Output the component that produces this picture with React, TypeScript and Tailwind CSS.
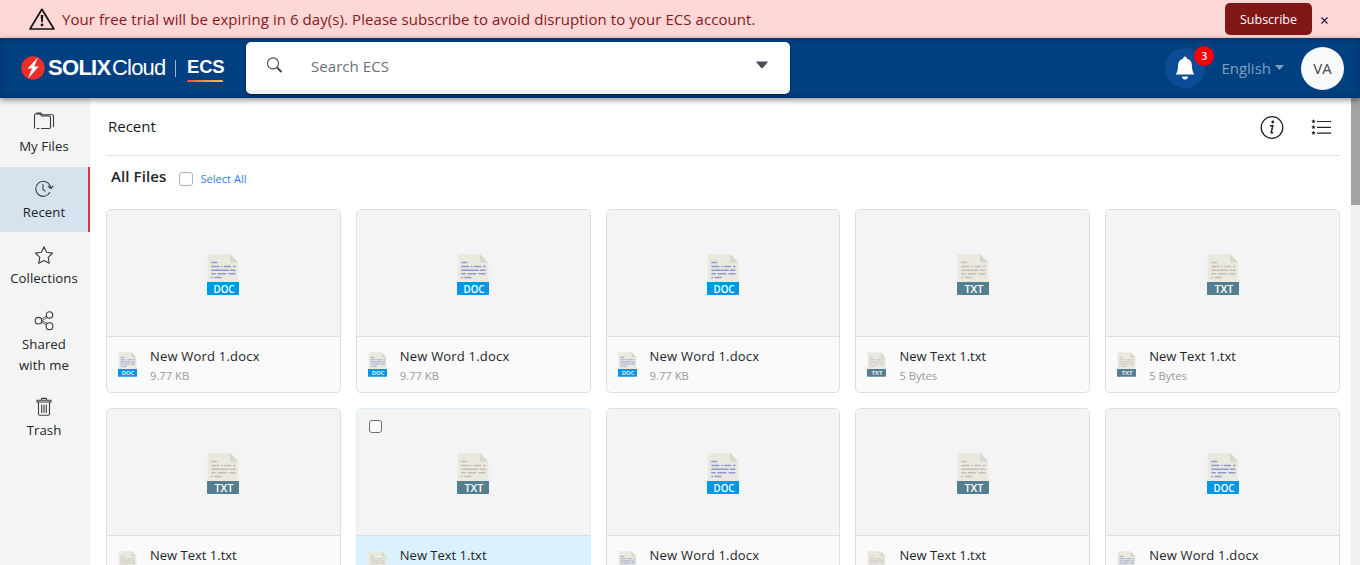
import type { ReactNode } from "react";

type Kind = "doc" | "txt";

const files: { kind: Kind; active?: boolean }[] = [
  { kind: "doc" },
  { kind: "doc" },
  { kind: "doc" },
  { kind: "txt" },
  { kind: "txt" },
  { kind: "txt" },
  { kind: "txt", active: true },
  { kind: "doc" },
  { kind: "txt" },
  { kind: "doc" },
];

function FileIcon({ kind, className }: { kind: Kind; className: string }) {
  const doc = kind === "doc";
  const ink = doc ? "#8e9bd0" : "#c9bcb8";
  const band = doc ? "#0096e6" : "#557f91";
  return (
    <svg viewBox="0 0 32 41" className={className}>
      <path d="M.8 0H23l8.200 8.500V29H.8z" fill="#e9e9e0" />
      <path d="M23 0v8.500h8.200z" fill="#d7d7ca" />
      <g stroke={ink} strokeWidth="1.400" strokeLinecap="round">
        <path d="M4.800 8.500h5M4.800 12.500h7M14.500 12.500h.5M17.500 12.500h6M26.500 12.500h1.500M4.800 16.200h16.500M23.500 16.200h4.500M4.800 19.800h3.500M11 19.800h8M22 19.800h6M4.800 23.500h.6M8 23.500h6" />
      </g>
      <path d="M0 28h32v12a1 1 0 0 1-1 1H1a1 1 0 0 1-1-1z" fill={band} />
      <text
        x="17"
        y="38.500"
        textAnchor="middle"
        fontSize="10.200"
        fontWeight="600"
        textLength={doc ? 21 : 19}
        lengthAdjust="spacingAndGlyphs"
        fill="#fff"
        fontFamily="Open Sans, sans-serif"
      >
        {doc ? "DOC" : "TXT"}
      </text>
    </svg>
  );
}

function FileCard({ kind, active }: { kind: Kind; active?: boolean }) {
  return (
    <div
      className={
        active
          ? "relative flex h-[184px] flex-col overflow-hidden rounded-[5px] border border-[#d8f0fc] bg-[#dbf1fd]"
          : "relative flex h-[184px] flex-col overflow-hidden rounded-[5px] border border-[#dedede] bg-[#fafafa]"
      }
    >
      {active && (
        <span className="absolute left-3 top-[11px] size-[13px] rounded-[3px] border border-[#6f6f6f] bg-white" />
      )}
      <div className="flex h-[127px] shrink-0 items-center justify-center border-b border-[#dedede] bg-[#f4f4f4] pt-[3px]">
        <FileIcon kind={kind} className="h-[41px] w-8" />
      </div>
      <div className="flex pl-[11px] pt-[15px]">
        <FileIcon kind={kind} className="h-[25px] w-[19px]" />
        <div className="-mt-[6px] ml-[13px]">
          <div
            className={
              kind === "doc"
                ? "h-5 whitespace-nowrap text-[13px] leading-5 tracking-[0.200px] text-[#212529]"
                : "h-5 whitespace-nowrap text-[13px] leading-5 text-[#212529]"
            }
          >
            {kind === "doc" ? "New Word 1.docx" : "New Text 1.txt"}
          </div>
          <div className="h-5 whitespace-nowrap text-[11.200px] leading-5 text-[#999]">
            {kind === "doc" ? "9.77 KB" : "5 Bytes"}
          </div>
        </div>
      </div>
    </div>
  );
}

const line = {
  fill: "none",
  stroke: "#3c3c3c",
  strokeWidth: 1.1,
  strokeLinejoin: "round" as const,
  strokeLinecap: "round" as const,
};

function NavItem({
  label,
  icon,
  className,
}: {
  label: ReactNode;
  icon: ReactNode;
  className: string;
}) {
  return (
    <div className={className}>
      {icon}
      <span className="mt-[3px] text-center text-[13.200px] leading-[21px] tracking-[0.070px] text-[#212529]">{label}</span>
    </div>
  );
}

function Sidebar() {
  const item = "flex shrink-0 flex-col items-center pr-[2px]";
  return (
    <nav className="flex w-[90px] shrink-0 flex-col bg-[#f4f4f4]">
      <NavItem
        className={`${item} h-[69px] pt-[13px]`}
        label={<span className="relative top-[2px]">My Files</span>}
        icon={
          <svg className="h-5 w-[22px]" viewBox="0 0 22 20" {...line}>
            <path d="M1.500 17V4.500q0-1.500 1.300-1.500H7l1.500 2H16q1.500 0 1.500 1.500V17M3.500 2h4.200l1.600 1.700h9.500q1.700 0 1.700 1.500V15.500M4 17.500h2M8.500 17.500h8" />
          </svg>
        }
      />
      <NavItem
        className="flex h-[65px] shrink-0 flex-col items-center border-r-2 border-[#ef3030] bg-[#d6e2ee] pt-3"
        label="Recent"
        icon={
          <svg className="h-5 w-[22px]" viewBox="0 0 22 20" {...line}>
            <path d="M16.800 13.500A7.500 7.500 0 1 1 17 6.500l.8 2.800M15.200 7.400l2.700 2.300 2-2.600M10 5.500v5l2.200 1.600" />
          </svg>
        }
      />
      <NavItem
        className={`${item} h-[66px] pt-[13px]`}
        label="Collections"
        icon={
          <svg className="h-5 w-[22px]" viewBox="0 0 22 20" {...line}>
            <path d="m11 1.800 2.600 5.500 6 .8-4.400 4.200 1.100 6-5.300-2.900-5.300 2.900 1.100-6-4.400-4.200 6-.8z" />
          </svg>
        }
      />
      <NavItem
        className={`${item} h-[87px] pt-[13px]`}
        label={
          <>
            Shared
            <br />
            with me
          </>
        }
        icon={
          <svg className="h-5 w-[22px]" viewBox="0 0 22 20" {...line}>
            <circle cx="5.500" cy="9.700" r="3.300" />
            <circle cx="16.500" cy="3.900" r="3.200" />
            <circle cx="16.500" cy="15.200" r="3.400" />
            <path d="m8.300 8 5.400-2.900M8.300 11.300l5.200 2.500M9 9.700l5-3M9 9.800l5.200 2.600" strokeWidth=".8" />
          </svg>
        }
      />
      <NavItem
        className={`${item} h-[66px] pt-[12px]`}
        label="Trash"
        icon={
          <svg className="h-5 w-[22px]" viewBox="0 0 22 20" {...line}>
            <path d="M5.500 5.500v11.200q0 1.600 1.500 1.600h8q1.500 0 1.500-1.600V5.500M4 5V3.200h14V5zM8.300 3l.5-1.600h4.400l.5 1.600M8.700 8v7.500M11 8v7.500M13.300 8v7.500" />
          </svg>
        }
      />
    </nav>
  );
}

function Banner() {
  return (
    <div className="flex h-[38px] shrink-0 items-center bg-[#ffd7d7]">
      <svg className="ml-[29px] h-[23px] w-[26px]" viewBox="0 0 26 23">
        <path d="M12.900 1.300 24.900 21H1z" fill="none" stroke="#111" strokeWidth="1.700" strokeLinejoin="round" />
        <path d="M11.700 7h2.600l-.5 7.200h-1.600z" fill="#111" />
        <circle cx="13" cy="17" r="1.400" fill="#111" />
      </svg>
      <span className="ml-[7px] whitespace-nowrap text-[15px] tracking-[0.070px] text-[#851919]">
        Your free trial will be expiring in 6 day(s). Please subscribe to avoid disruption to your ECS account.
      </span>
      <button className="ml-auto h-8 w-[87px] rounded-[5px] bg-[#801717] pt-[2px] text-[12.500px] text-white">
        Subscribe
      </button>
      <svg className="ml-[9px] mr-[32px] mt-[3px] size-[7px]" viewBox="0 0 7 7" stroke="#17174a" strokeWidth="1.100">
        <path d="m.5.5 6 6M6.500.5l-6 6" />
      </svg>
    </div>
  );
}

function Logo() {
  return (
    <div className="flex w-[225px] shrink-0 items-center pl-[21px] font-['Liberation_Sans',sans-serif] text-white">
      <svg className="size-6 shrink-0" viewBox="0 0 24 24">
        <circle cx="12" cy="12" r="11.700" fill="#ee2e2b" />
        <path d="M16.800 1.500 6.500 12.700l4.600-.4L7 22.500l11-12.300-4.700.5z" fill="#fff" />
      </svg>
      <span className="ml-[3px] w-16 whitespace-nowrap text-[22px] font-bold leading-6 tracking-[-0.700px]">SOLIX</span>
      <span className="w-[54px] whitespace-nowrap text-[22px] leading-6 tracking-[-0.800px]">Cloud</span>
      <span className="ml-[9px] h-[17px] w-px bg-[#9db5cf]" />
      <span className="ml-[11px] flex w-[37px] flex-col pt-[4px]">
        <span className="text-[18.500px] font-bold leading-[18px] tracking-[-0.200px]">ECS</span>
        <span className="mt-[4px] h-[2px] w-9 rounded bg-linear-to-r from-[#f0503c] to-[#f6c04c]" />
      </span>
    </div>
  );
}

function Header() {
  return (
    <header className="relative z-10 flex h-[60px] shrink-0 items-center bg-[#003f80] shadow-[0_2px_6px_rgba(0,0,0,0.45),inset_0_0_6px_rgba(0,0,0,0.3)]">
      <Logo />
      <div className="ml-[21px] flex h-[52px] w-[544px] items-center rounded-[5px] border-b-4 border-[#f2f2f2] bg-white shadow-[0_1px_2px_rgba(0,0,0,0.6)]">
        <svg className="-mt-[3px] ml-5 h-4 w-[17px]" viewBox="0 0 17 16" fill="none" stroke="#44484c">
          <circle cx="7" cy="6.400" r="5.500" strokeWidth="1.100" />
          <path d="m11 10.500 4.500 4.500" strokeWidth="1.900" />
        </svg>
        <span className="ml-7 mt-[1px] text-[15px] tracking-[0.050px] text-[#6c7177]">Search ECS</span>
        <svg className="-mt-[3px] ml-auto mr-[22px] h-2 w-3" viewBox="0 0 12 8">
          <path d="M.5.500h11q.5.500 0 1L6.700 7q-.7.700-1.400 0L.5 1.500q-.5-.5 0-1z" fill="#495057" />
        </svg>
      </div>
      <div className="relative ml-auto flex size-10 items-center justify-center rounded-full bg-[#0c4c97]">
        <svg className="h-6 w-5" viewBox="0 0 20 24" fill="#fff">
          <path d="M10 .5c1 0 1.800.7 1.700 1.900 3.300.8 5 3.300 5.200 6.500.2 4.700.8 7.500 2.500 9.600H.6c1.700-2.100 2.300-4.900 2.500-9.600.2-3.200 1.900-5.700 5.200-6.500C8.200 1.200 9 .5 10 .5zM7 20.500h6c0 2-1.300 3-3 3s-3-1-3-3z" />
        </svg>
        <span className="absolute -top-[2px] left-[29px] flex size-5 items-center justify-center rounded-full bg-[#fd0000] text-[10px] font-semibold text-white">
          3
        </span>
      </div>
      <span className="ml-4 text-[15px] text-[#7e9fc0]">English</span>
      <svg className="-mt-[2px] ml-1 h-[5px] w-[9px]" viewBox="0 0 9 5">
        <path d="M0 0h9L4.500 5z" fill="#7e9fc0" />
      </svg>
      <span className="ml-[17px] mr-4 flex size-[43px] items-center justify-center rounded-full bg-[#f8f9fb] text-[15px] text-[#43474b]">
        VA
      </span>
    </header>
  );
}

function Toolbar() {
  return (
    <div className="flex h-[58px] items-center border-b border-[#dee2e6]">
      <span className="ml-[2px] text-[15px] text-[#16191c]">Recent</span>
      <svg className="ml-auto size-6" viewBox="0 0 24 24">
        <circle cx="12" cy="12.500" r="10.800" fill="none" stroke="#222" strokeWidth="1.300" />
        <circle cx="12.800" cy="7" r="1.400" fill="#222" />
        <path d="M9.800 10.800h3l-1.600 6.600q-.1 1.200 1.800-.2" fill="none" stroke="#222" strokeWidth="1.500" />
      </svg>
      <svg className="ml-[27px] mr-[9px] h-[18px] w-5" viewBox="0 0 20 18" stroke="#222" fill="#222">
        <path d="M6 3.500h14M6 9.300h14M6 15.100h14" strokeWidth="1.200" />
        <path
          d="m2.500 1 .6 1.500 1.600.2-1.200 1 .4 1.500-1.400-.8-1.400.8.4-1.500-1.200-1 1.600-.2zM2.500 6.800l.6 1.500 1.600.2-1.200 1 .4 1.500-1.400-.8-1.400.8.4-1.500-1.200-1 1.600-.2zM2.500 12.600l.6 1.500 1.600.2-1.200 1 .4 1.500-1.400-.8-1.400.8.4-1.500-1.200-1 1.600-.2z"
          stroke="none"
        />
      </svg>
    </div>
  );
}

export default function App() {
  return (
    <div className="flex h-[565px] w-[1360px] flex-col overflow-hidden bg-white font-['Open_Sans','Noto_Sans',sans-serif]">
      <Banner />
      <Header />
      <div className="flex min-h-0 flex-1">
        <Sidebar />
        <main className="min-w-0 flex-1 overflow-hidden pl-4 pr-[11px]">
          <Toolbar />
          <div className="flex h-[53px] items-start pl-[5px]">
            <span className="mt-[8px] text-[15px] font-semibold leading-6 tracking-[0.100px] text-[#212529]">All Files</span>
            <span className="ml-[13px] mt-4 size-[14px] rounded-[3px] border border-[#adb5bd] bg-white" />
            <span className="ml-[7px] mt-[14px] text-[11px] font-medium leading-[18px] tracking-[0.050px] text-[#2d7dfa]">
              Select All
            </span>
          </div>
          <div className="grid grid-cols-5 gap-[15px]">
            {files.map((f, i) => (
              <FileCard key={i} {...f} />
            ))}
          </div>
        </main>
        <div className="w-[9px] shrink-0 bg-[#f1f1f1]">
          <div className="h-[107px] bg-[#a3a3a3]" />
        </div>
      </div>
    </div>
  );
}
